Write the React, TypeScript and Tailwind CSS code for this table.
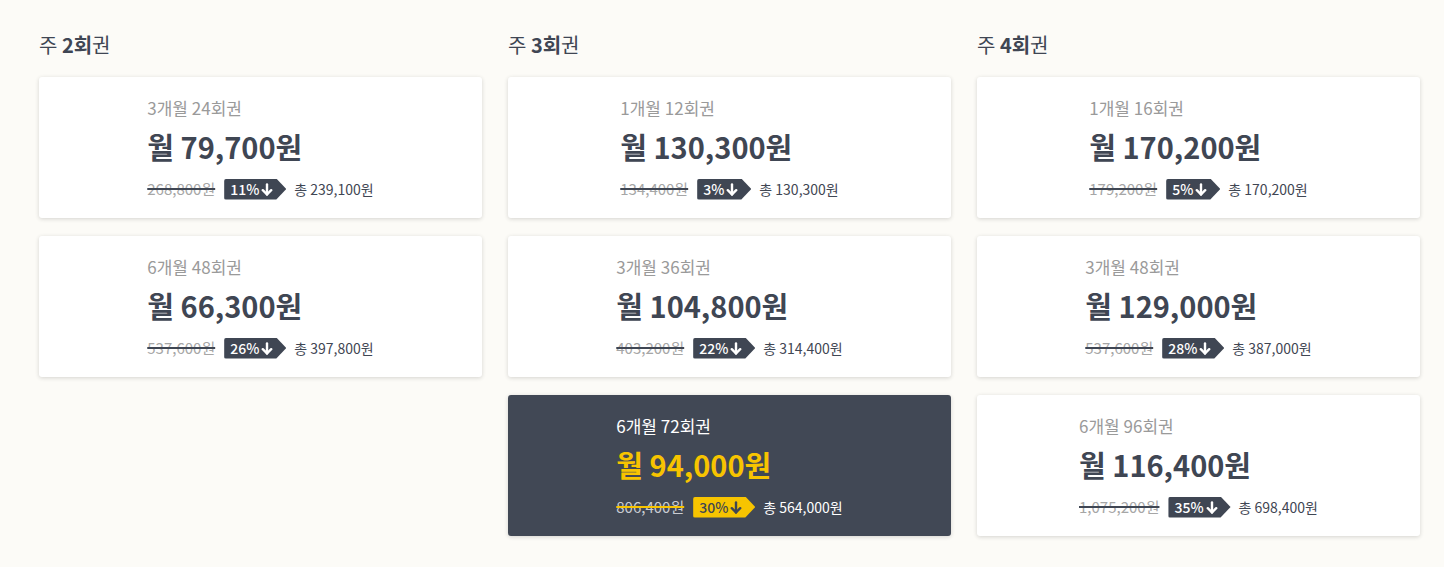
import React from 'react';

type Plan = {
  label: string;
  price: string;
  original: string;
  discount: string;
  total: string;
  selected?: boolean;
};

const columns: { count: string; plans: Plan[] }[] = [
  {
    count: '2',
    plans: [
      { label: '3개월 24회권', price: '월 79,700원', original: '268,800원', discount: '11%', total: '총 239,100원' },
      { label: '6개월 48회권', price: '월 66,300원', original: '537,600원', discount: '26%', total: '총 397,800원' },
    ],
  },
  {
    count: '3',
    plans: [
      { label: '1개월 12회권', price: '월 130,300원', original: '134,400원', discount: '3%', total: '총 130,300원' },
      { label: '3개월 36회권', price: '월 104,800원', original: '403,200원', discount: '22%', total: '총 314,400원' },
      { label: '6개월 72회권', price: '월 94,000원', original: '806,400원', discount: '30%', total: '총 564,000원', selected: true },
    ],
  },
  {
    count: '4',
    plans: [
      { label: '1개월 16회권', price: '월 170,200원', original: '179,200원', discount: '5%', total: '총 170,200원' },
      { label: '3개월 48회권', price: '월 129,000원', original: '537,600원', discount: '28%', total: '총 387,000원' },
      { label: '6개월 96회권', price: '월 116,400원', original: '1,075,200원', discount: '35%', total: '총 698,400원' },
    ],
  },
];

const ArrowDown = () => (
  <svg width="12" height="13" viewBox="0 0 12 13" fill="none" stroke="currentColor" strokeWidth="2.4" strokeLinecap="round" strokeLinejoin="round">
    <path d="M6 1.5v10" />
    <path d="M1.8 7.2L6 11.4l4.2-4.2" />
  </svg>
);

const PlanCard: React.FC<{ plan: Plan }> = ({ plan }) => {
  const sel = plan.selected;
  return (
    <div
      className={`h-[141px] rounded-[3px] flex justify-center pt-[19px] shadow-[0_1px_4px_rgba(0,0,0,0.16)] ${
        sel ? 'bg-[#414855]' : 'bg-white'
      }`}
    >
      <div className="flex flex-col">
        <div className={`text-[17px] leading-[24px] ${sel ? 'text-white' : 'text-[#9a9a9a]'}`}>{plan.label}</div>
        <div className={`mt-[6px] text-[29px] leading-[40px] font-bold ${sel ? 'text-[#f7c400]' : 'text-[#3f4653]'}`}>
          {plan.price}
        </div>
        <div className="mt-[12px] flex items-center text-[14px] leading-[22px]">
          <span
            className={`text-[15px] line-through decoration-2 ${
              sel ? 'text-[#c9ccd2] decoration-[#f7c400]' : 'text-[#a6a6a6] decoration-[#3f4653]'
            }`}
          >
            {plan.original}
          </span>
          <span
            className={`ml-[9px] h-[21px] pl-[6px] pr-[13px] flex items-center gap-[2px] rounded-l-[2px] font-medium [clip-path:polygon(0_0,calc(100%_-_10px)_0,100%_50%,calc(100%_-_10px)_100%,0_100%)] ${
              sel ? 'bg-[#f7c400] text-[#3f4653]' : 'bg-[#3f4653] text-white'
            }`}
          >
            {plan.discount}
            <ArrowDown />
          </span>
          <span className={`ml-[8px] ${sel ? 'text-white' : 'text-[#3f4653]'}`}>{plan.total}</span>
        </div>
      </div>
    </div>
  );
};

export default function App() {
  return (
    <div className="min-h-[567px] bg-[#fcfbf7] pl-[39px] pt-[31px] font-['Noto_Sans_CJK_KR','Noto_Sans',sans-serif]">
      <div className="flex gap-[26px]">
        {columns.map((col) => (
          <div key={col.count} className="w-[443px] flex flex-col">
            <h2 className="text-[20px] leading-[28px] text-[#3f4653] mb-[18px]">
              주 <span className="font-bold">{col.count}회</span>권
            </h2>
            <div className="flex flex-col gap-[18px]">
              {col.plans.map((p) => (
                <PlanCard key={p.label} plan={p} />
              ))}
            </div>
          </div>
        ))}
      </div>
    </div>
  );
}
